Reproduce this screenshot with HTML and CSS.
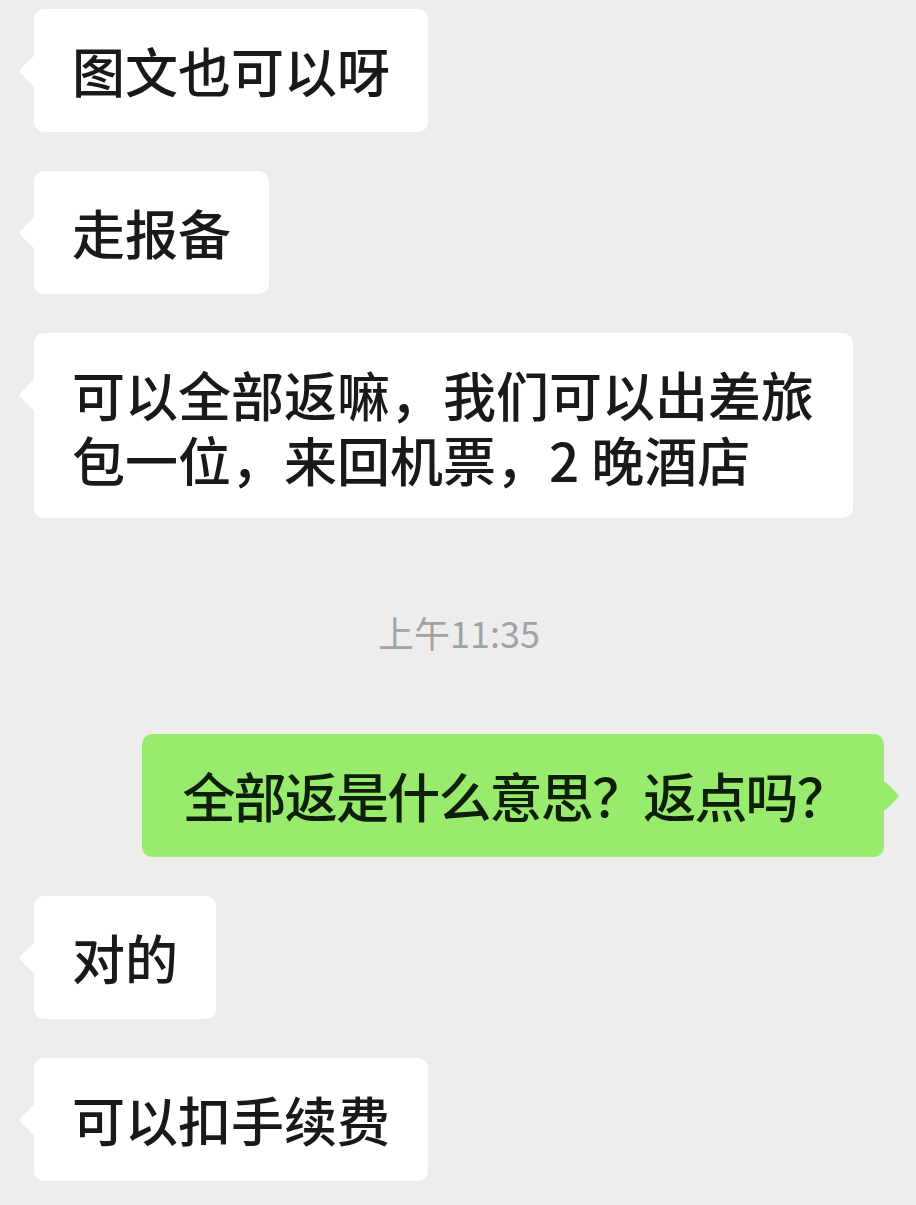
FILE: index.html
```html
<!DOCTYPE html>
<html lang="zh-CN">
<head>
    <meta charset="UTF-8">
    <meta name="viewport" content="width=device-width, initial-scale=1.0">
    <title>聊天记录</title>
    <link rel="stylesheet" href="styles.css">
</head>
<body>
    <div class="chat">
        <div class="row left">
            <div class="bubble">图文也可以呀</div>
        </div>
        <div class="row left">
            <div class="bubble">走报备</div>
        </div>
        <div class="row left">
            <div class="bubble wide">可以全部返嘛，我们可以出差旅包一位，来回机票，2 晚酒店</div>
        </div>
        <div class="time">上午11:35</div>
        <div class="row right">
            <div class="bubble mine">全部返是什么意思？返点吗？</div>
        </div>
        <div class="row left">
            <div class="bubble">对的</div>
        </div>
        <div class="row left">
            <div class="bubble">可以扣手续费</div>
        </div>
    </div>
</body>
</html>
```
FILE: styles.css
```css
body {
    margin: 0;
    background: #ededed;
    font-family: "Noto Sans CJK SC", "Noto Sans", sans-serif;
    color: #191919;
}
.chat {
    display: flex;
    flex-direction: column;
    gap: 39px;
    padding: 9px 32px 0 34px;
}
.row {
    display: flex;
}
.row.right {
    justify-content: flex-end;
}
.bubble {
    position: relative;
    background: #fff;
    border-radius: 10px;
    padding: 29px 38px;
    font-size: 53px;
    font-weight: 500;
    line-height: 65px;
}
.bubble::before {
    content: "";
    position: absolute;
    top: 51px;
    left: -11px;
    width: 22px;
    height: 22px;
    background: inherit;
    border-radius: 3px;
    transform: rotate(45deg);
}
.bubble.wide {
    box-sizing: border-box;
    max-width: 819px;
    padding-bottom: 26px;
}
.bubble.mine {
    background: #98eb6d;
    color: #0d1f08;
    padding: 29px 36px 29px 40px;
    letter-spacing: -1.8px;
}
.bubble.mine::before {
    left: auto;
    right: -11px;
}
.time {
    margin: 50px 0 38px;
    text-align: center;
    font-size: 36px;
    line-height: 50px;
    color: #a3a3a3;
}
```
